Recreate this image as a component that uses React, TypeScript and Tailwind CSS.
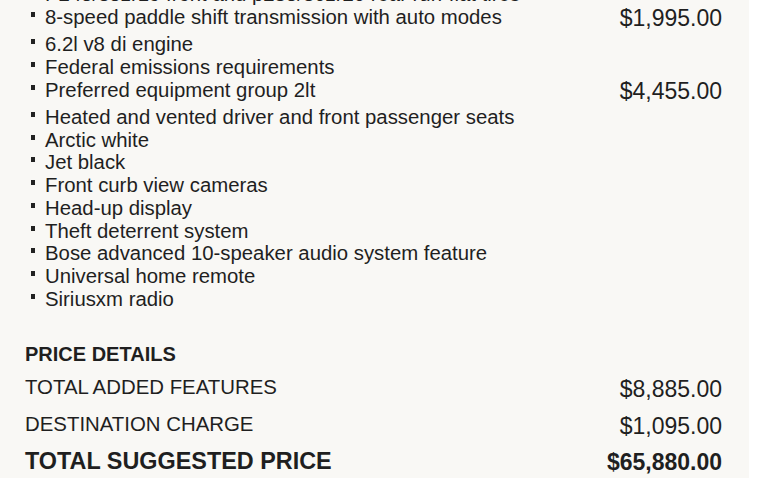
const groups = [
  {
    items: [
      "P245/35zr19 front and p285/30zr20 rear run-flat tires",
      "8-speed paddle shift transmission with auto modes",
    ],
    price: "$1,995.00",
  },
  {
    items: ["6.2l v8 di engine", "Federal emissions requirements", "Preferred equipment group 2lt"],
    price: "$4,455.00",
  },
  {
    items: [
      "Heated and vented driver and front passenger seats",
      "Arctic white",
      "Jet black",
      "Front curb view cameras",
      "Head-up display",
      "Theft deterrent system",
      "Bose advanced 10-speaker audio system feature",
      "Universal home remote",
      "Siriusxm radio",
    ],
    price: "",
  },
];

const details = [
  { label: "TOTAL ADDED FEATURES", value: "$8,885.00" },
  { label: "DESTINATION CHARGE", value: "$1,095.00" },
];

function OptionGroup({ items, price }: { items: string[]; price: string }) {
  return (
    <div className="flex justify-between items-end">
      <ul className="pl-[6px]">
        {items.map((t) => (
          <li key={t} className="flex items-start text-[20.35px] leading-[22.75px] whitespace-nowrap">
            <span className="w-[4px] h-[5px] bg-[#222] mt-[6px] mr-[10px] shrink-0" />
            {t}
          </li>
        ))}
      </ul>
      {price && <span className="text-[23px] leading-[22.75px] mb-[-1px]">{price}</span>}
    </div>
  );
}

export default function App() {
  return (
    <div className="w-[757px] h-[495px] bg-white overflow-hidden">
      <div
        className="w-[749px] h-full bg-[#f9f8f5] pl-[25px] pr-[27px] text-[#1f1f1f]"
        style={{ fontFamily: "'Liberation Sans', Arial, sans-serif" }}
      >
        {/* Option list */}
        <div className="-mt-[17px] flex flex-col gap-[4.5px]">
          {groups.map((g, i) => (
            <OptionGroup key={i} items={g.items} price={g.price} />
          ))}
        </div>

        {/* Price details */}
        <div className="mt-[31px]">
          <p className="text-[20px] font-bold leading-[24px]">PRICE DETAILS</p>
          <div className="mt-[3px]">
            {details.map((d) => (
              <div key={d.label} className="flex justify-between items-center h-[37.5px]">
                <span className="text-[20.4px]">{d.label}</span>
                <span className="text-[23px] mt-[3px]">{d.value}</span>
              </div>
            ))}
            <div className="flex justify-between items-center h-[37px] font-bold">
              <span className="text-[23.4px]">TOTAL SUGGESTED PRICE</span>
              <span className="text-[23px]">$65,880.00</span>
            </div>
          </div>
        </div>
      </div>
    </div>
  );
}
